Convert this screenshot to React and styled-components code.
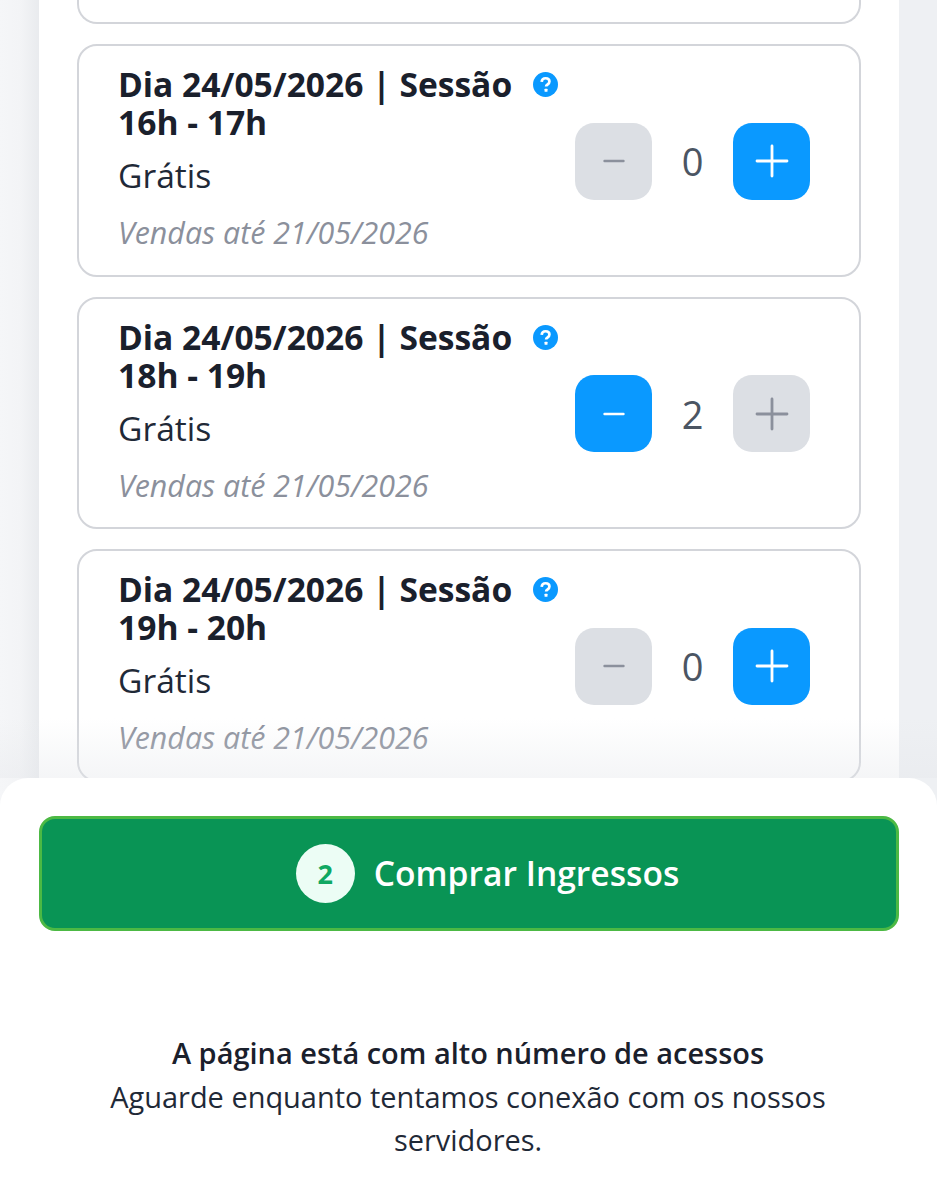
import React from "react";
import styled, { createGlobalStyle } from "styled-components";

const Global = createGlobalStyle`
  html, body { margin: 0; padding: 0; background: #f3f4f6; }
  body { font-family: "Open Sans", "Liberation Sans", sans-serif; }
  * { box-sizing: border-box; }
`;

const Page = styled.div`
  position: relative;
  width: 937px;
  height: 1200px;
  overflow: hidden;
  background: linear-gradient(to right, #f5f6f8 0, #f3f4f6 20px, #e9ebee 39px, #eef0f3 899px);
`;

const Panel = styled.main`
  width: 860px;
  margin-left: 39px;
  height: 1200px;
  background: #fff;
  padding: 0 38px;
  display: flex;
  flex-direction: column;
  gap: 20px;
`;

const ClippedCard = styled.div`
  height: 24px;
  flex: none;
  border: 2px solid #d3d5da;
  border-top: 0;
  border-radius: 0 0 20px 20px;
`;

const Card = styled.article`
  flex: none;
  height: 232.5px;
  border: 2px solid #d3d5da;
  border-radius: 20px;
  padding: 19px 49px 0 39px;
  display: flex;
  justify-content: space-between;
  align-items: center;
`;

const Info = styled.div`
  width: 440px;
  align-self: flex-start;
  display: flex;
  flex-direction: column;
`;

const TitleRow = styled.div`
  display: flex;
  justify-content: space-between;
  align-items: flex-start;
`;

const Title = styled.h3`
  margin: 0;
  width: 400px;
  font-size: 33.6px;
  line-height: 38px;
  font-weight: 700;
  color: #1a202c;
`;

const Help = styled.svg`
  width: 25px;
  height: 25px;
  margin-top: 7px;
  flex: none;
`;

const Price = styled.div`
  margin-top: 15px;
  font-size: 33.6px;
  line-height: 38px;
  color: #1f2937;
`;

const Deadline = styled.div`
  margin-top: 20px;
  font-size: 30.4px;
  line-height: 38px;
  font-style: italic;
  color: #8b909c;
`;

const Stepper = styled.div`
  display: flex;
  align-items: center;
  margin-top: -17px;
`;

const StepButton = styled.button`
  width: 77px;
  height: 77px;
  padding: 0;
  border: 0;
  border-radius: 19px;
  display: flex;
  align-items: center;
  justify-content: center;
  background: ${(p) => (p.$active ? "#0a99ff" : "#dcdfe4")};
  color: ${(p) => (p.$active ? "#fff" : "#8b909c")};
`;

const Count = styled.span`
  width: 81px;
  text-align: center;
  font-size: 38px;
  font-weight: 500;
  line-height: 44px;
  color: #4b5563;
`;

const Fade = styled.div`
  position: absolute;
  left: 0;
  right: 0;
  bottom: 422px;
  height: 60px;
  background: linear-gradient(to bottom, rgba(229, 231, 235, 0), rgba(229, 231, 235, 0.4));
  pointer-events: none;
`;

const Sheet = styled.section`
  position: absolute;
  left: 0;
  right: 0;
  bottom: 0;
  height: 422px;
  background: #fff;
  border-radius: 28px 28px 0 0;
  padding: 38px 38px 0 39px;
  display: flex;
  flex-direction: column;
  align-items: center;
`;

const Buy = styled.button`
  width: 100%;
  height: 115px;
  flex: none;
  border: 3px solid #4cb944;
  border-radius: 16px;
  background: #099455;
  color: #fff;
  display: flex;
  align-items: center;
  justify-content: center;
  gap: 19px;
  font-family: inherit;
  font-size: 33.6px;
  font-weight: 600;
  padding: 0 0 1px 37px;
`;

const Badge = styled.span`
  width: 59px;
  height: 59px;
  border-radius: 50%;
  background: #ecfdf5;
  color: #10a862;
  font-size: 27px;
  font-weight: 700;
  display: flex;
  align-items: center;
  justify-content: center;
`;

const Notice = styled.div`
  margin: 100px 2px 0 0;
  width: 740px;
  text-align: center;
  font-size: 28.95px;
  line-height: 43.5px;
  color: #1f2937;
`;

const NoticeTitle = styled.div`
  font-weight: 600;
  color: #1a202c;
`;

const MinusIcon = () => (
  <svg width="24" height="24" viewBox="0 0 24 24" aria-hidden="true">
    <path d="M2.5 12H21.5" stroke="currentColor" strokeWidth="2.4" strokeLinecap="round" />
  </svg>
);

const PlusIcon = () => (
  <svg width="34" height="34" viewBox="0 0 34 34" aria-hidden="true">
    <path d="M17 2V32M2 17H32" stroke="currentColor" strokeWidth="2.8" strokeLinecap="round" />
  </svg>
);

const HelpIcon = () => (
  <Help viewBox="0 0 26 26" aria-hidden="true">
    <circle cx="13" cy="13" r="13" fill="#0a99ff" />
    <path
      d="M9 10.2c.2-2.3 1.9-3.7 4.1-3.7 2.3 0 4 1.3 4 3.4 0 1.6-.9 2.4-2 3.1-1 .6-1.5 1.1-1.5 2.2"
      fill="none"
      stroke="#fff"
      strokeWidth="2.8"
    />
    <rect x="12" y="17.4" width="3.1" height="3.1" rx=".6" fill="#fff" />
  </Help>
);

const sessions = [
  { time: "16h - 17h", count: 0 },
  { time: "18h - 19h", count: 2 },
  { time: "19h - 20h", count: 0 },
];

export default function App() {
  return (
    <Page>
      <Global />
      <Panel>
        <ClippedCard />
        {sessions.map((s) => (
          <Card key={s.time}>
            <Info>
              <TitleRow>
                <Title>
                  Dia 24/05/2026 | Sessão
                  <br />
                  {s.time}
                </Title>
                <HelpIcon />
              </TitleRow>
              <Price>Grátis</Price>
              <Deadline>Vendas até 21/05/2026</Deadline>
            </Info>
            <Stepper>
              <StepButton $active={s.count > 0}>
                <MinusIcon />
              </StepButton>
              <Count>{s.count}</Count>
              <StepButton $active={s.count === 0}>
                <PlusIcon />
              </StepButton>
            </Stepper>
          </Card>
        ))}
      </Panel>
      <Fade />
      <Sheet>
        <Buy>
          <Badge>2</Badge>
          Comprar Ingressos
        </Buy>
        <Notice>
          <NoticeTitle>A página está com alto número de acessos</NoticeTitle>
          Aguarde enquanto tentamos conexão com os nossos servidores.
        </Notice>
      </Sheet>
    </Page>
  );
}
